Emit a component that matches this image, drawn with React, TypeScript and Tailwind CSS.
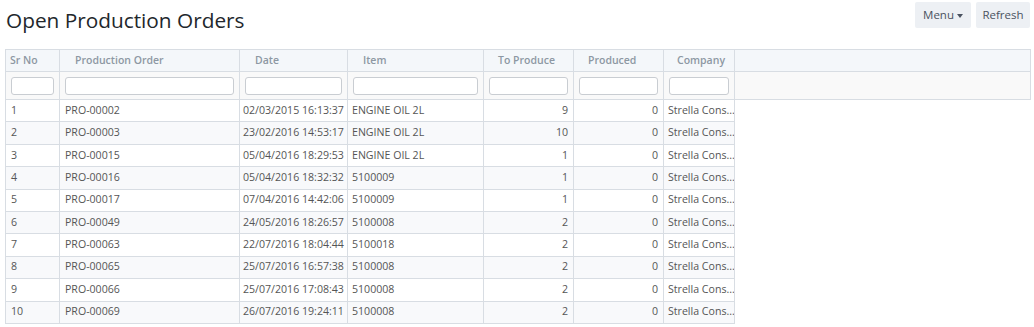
import React from "react";

const rows = [
  ["1", "PRO-00002", "02/03/2015 16:13:37", "ENGINE OIL 2L", "9", "0"],
  ["2", "PRO-00003", "23/02/2016 14:53:17", "ENGINE OIL 2L", "10", "0"],
  ["3", "PRO-00015", "05/04/2016 18:29:53", "ENGINE OIL 2L", "1", "0"],
  ["4", "PRO-00016", "05/04/2016 18:32:32", "5100009", "1", "0"],
  ["5", "PRO-00017", "07/04/2016 14:42:06", "5100009", "1", "0"],
  ["6", "PRO-00049", "24/05/2016 18:26:57", "5100008", "2", "0"],
  ["7", "PRO-00063", "22/07/2016 18:04:44", "5100018", "2", "0"],
  ["8", "PRO-00065", "25/07/2016 16:57:38", "5100008", "2", "0"],
  ["9", "PRO-00066", "25/07/2016 17:08:43", "5100008", "2", "0"],
  ["10", "PRO-00069", "26/07/2016 19:24:11", "5100008", "2", "0"],
];

const cellW = ["w-[54px]", "w-[180px]", "w-[108px]", "w-[136px]", "w-[90px]", "w-[90px]", "w-[71px]"];

export default function App() {
  return (
    <div
      className="w-[1034px] h-[327px] bg-white overflow-hidden text-[#555]"
      style={{ fontFamily: '"Open Sans", "Noto Sans", sans-serif' }}
    >
      <div className="flex items-start justify-between h-[49px]">
        <h1 className="ml-[6px] mt-[5px] text-[20.8px] leading-[30px] text-[#22272c] font-normal">
          Open Production Orders
        </h1>
        <div className="flex gap-[5px] mt-[2px] mr-[4px]">
          <button className="w-[56px] h-[26px] rounded-[2px] bg-[#edf0f4] text-[11.5px] text-[#4a5260] flex items-center justify-center gap-[3px]">
            Menu
            <span className="inline-block w-0 h-0 border-l-[3.5px] border-r-[3.5px] border-t-[4px] border-l-transparent border-r-transparent border-t-[#4a5260] mt-[1px]" />
          </button>
          <button className="w-[54px] h-[26px] rounded-[2px] bg-[#edf0f4] text-[11.5px] text-[#4a5260] flex items-center justify-center">
            Refresh
          </button>
        </div>
      </div>

      <div className="ml-[5px] w-[1026px] border-l border-r border-t border-[#d8dde3]">
        {/* header */}
        <div className="flex h-[22px] bg-[#f4f7fa] border-b border-[#d8dde3] text-[10.5px] font-semibold text-[#8d98a3]">
          <div className={`${cellW[0]} shrink-0 border-r border-[#d8dde3] pl-[4px] flex items-center`}>Sr No</div>
          <div className={`${cellW[1]} shrink-0 border-r border-[#d8dde3] pl-[15px] flex items-center`}>Production Order</div>
          <div className={`${cellW[2]} shrink-0 border-r border-[#d8dde3] pl-[15px] flex items-center`}>Date</div>
          <div className={`${cellW[3]} shrink-0 border-r border-[#d8dde3] pl-[15px] flex items-center`}>Item</div>
          <div className={`${cellW[4]} shrink-0 border-r border-[#d8dde3] pl-[14px] flex items-center`}>To Produce</div>
          <div className={`${cellW[5]} shrink-0 border-r border-[#d8dde3] pl-[14px] flex items-center`}>Produced</div>
          <div className={`${cellW[6]} shrink-0 border-r border-[#d8dde3] pl-[13px] flex items-center`}>Company</div>
          <div className="flex-1" />
        </div>
        {/* filter */}
        <div className="flex h-[28px] bg-[#f9f9f9] border-b border-[#d8dde3]">
          {cellW.map((w, i) => (
            <div key={i} className={`${w} shrink-0 border-r border-[#d8dde3] flex items-center px-[5px]`}>
              <input className="w-full h-[18px] bg-white border border-[#c9cdd2] rounded-[3px] outline-none" />
            </div>
          ))}
          <div className="flex-1" />
        </div>
      </div>
      {/* body */}
      <div className="ml-[5px] w-[730px] border-l border-[#d8dde3] text-[10.6px]">
        {rows.map((r, idx) => (
          <div
            key={idx}
            className={`flex h-[22.4px] border-b border-[#d8dde3] ${idx % 2 === 1 ? "bg-[#f8f9fb]" : "bg-white"}`}
          >
            <div className={`${cellW[0]} shrink-0 border-r border-[#d8dde3] pl-[5px] flex items-center`}>{r[0]}</div>
            <div className={`${cellW[1]} shrink-0 border-r border-[#d8dde3] pl-[5px] flex items-center`}>{r[1]}</div>
            <div className={`${cellW[2]} shrink-0 border-r border-[#d8dde3] pl-[3px] flex items-center whitespace-nowrap`}>{r[2]}</div>
            <div className={`${cellW[3]} shrink-0 border-r border-[#d8dde3] pl-[4px] flex items-center`}>{r[3]}</div>
            <div className={`${cellW[4]} shrink-0 border-r border-[#d8dde3] pr-[5px] flex items-center justify-end`}>{r[4]}</div>
            <div className={`${cellW[5]} shrink-0 border-r border-[#d8dde3] pr-[5px] flex items-center justify-end`}>{r[5]}</div>
            <div className={`${cellW[6]} shrink-0 border-r border-[#d8dde3] pl-[4px] flex items-center whitespace-nowrap overflow-hidden`}>Strella Cons...</div>
          </div>
        ))}
      </div>
    </div>
  );
}
